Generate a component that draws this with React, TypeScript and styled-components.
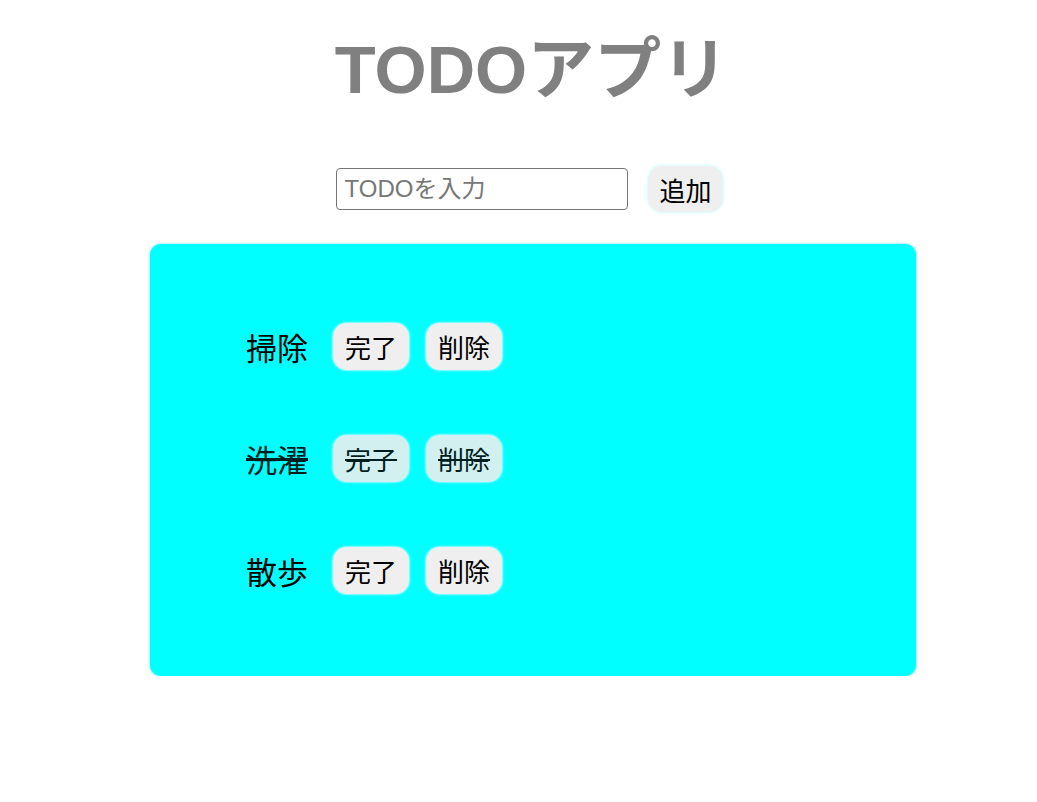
import React from "react";
import styled, { createGlobalStyle, css } from "styled-components";

const GlobalStyle = createGlobalStyle`
  html, body { margin: 0; padding: 0; background: #ffffff; }
  body { font-family: "Liberation Sans", "Noto Sans CJK JP", sans-serif; }
`;

const Page = styled.div`
  display: flex;
  flex-direction: column;
  align-items: center;
  padding-left: 22px;
  padding-top: 28px;
`;

const Title = styled.h1`
  margin: 0 0 0 4px;
  font-size: 67px;
  font-weight: 700;
  color: #808080;
  line-height: 84px;
  letter-spacing: 0;
`;

const InputRow = styled.div`
  display: flex;
  align-items: center;
  gap: 20px;
  margin-top: 54px;
`;

const TextInput = styled.input`
  box-sizing: border-box;
  width: 292px;
  height: 42px;
  border: 1.5px solid #767676;
  border-radius: 4px;
  padding: 0 7px;
  font-size: 24px;
  font-family: "Liberation Sans", "Noto Sans CJK JP", sans-serif;
  color: #000;
  &::placeholder { color: #777; }
`;

const Button = styled.button`
  box-sizing: border-box;
  border: none;
  background: #efefef;
  border-radius: 14px;
  padding: 0 12px;
  height: 47px;
  font-size: 26px;
  font-family: "Noto Sans CJK JP", sans-serif;
  color: #000;
  box-shadow: 0 0 2px 1px rgba(200, 255, 255, 0.8);
`;

const AddButton = styled(Button)`
  height: 46px;
  padding: 0 11px;
`;

const Card = styled.div`
  box-sizing: border-box;
  width: 766px;
  margin: 32px 0 0 7px;
  background: #00ffff;
  border-radius: 11px;
  box-shadow: 0 0 2px 1px rgba(120, 230, 255, 0.6);
  padding: 79px 0 82px 96px;
`;

const List = styled.ul`
  list-style: none;
  margin: 0;
  padding: 0;
  display: flex;
  flex-direction: column;
  gap: 65px;
`;

const Item = styled.li<{ $done?: boolean }>`
  display: flex;
  align-items: center;
  gap: 17px;
  height: 47px;
  ${(p) =>
    p.$done &&
    css`
      opacity: 0.88;
      text-decoration: line-through;
      & button { text-decoration: line-through; }
    `}
`;

const ItemText = styled.span`
  font-size: 31px;
  font-family: "Noto Sans CJK JP", sans-serif;
  color: #000;
  margin-right: 8px;
`;

const todos = [
  { text: "掃除", done: false },
  { text: "洗濯", done: true },
  { text: "散歩", done: false },
];

export default function App() {
  return (
    <>
      <GlobalStyle />
      <Page>
        <Title>TODOアプリ</Title>
        <InputRow>
          <TextInput placeholder="TODOを入力" />
          <AddButton>追加</AddButton>
        </InputRow>
        <Card>
          <List>
            {todos.map((t) => (
              <Item key={t.text} $done={t.done}>
                <ItemText>{t.text}</ItemText>
                <Button>完了</Button>
                <Button>削除</Button>
              </Item>
            ))}
          </List>
        </Card>
      </Page>
    </>
  );
}
